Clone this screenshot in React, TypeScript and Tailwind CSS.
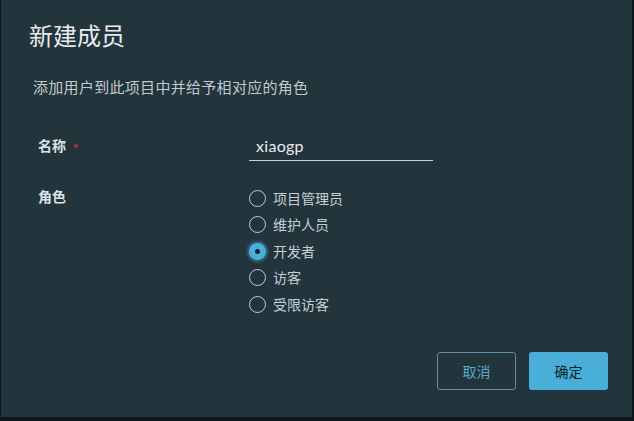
const roles = ["项目管理员", "维护人员", "开发者", "访客", "受限访客"];

function Radio({ checked }: { checked: boolean }) {
  if (checked) {
    return (
      <span className="flex h-[17px] w-[17px] items-center justify-center rounded-full bg-[#49afd9] shadow-[0_0_3px_2px_rgba(73,175,217,0.45)]">
        <span className="h-[5px] w-[5px] rounded-full bg-[#13242b]" />
      </span>
    );
  }
  return <span className="h-[17px] w-[17px] rounded-full border border-[#c6ced2]" />;
}

export default function App() {
  return (
    <div
      className="h-[421px] w-[634px] bg-[#0c171c]"
      style={{ fontFamily: '"Lato", "Noto Sans CJK SC", sans-serif' }}
    >
      <div className="ml-[1px] flex h-[417px] w-[631px] flex-col bg-[#22343c]">
        <div className="pl-[28px] pt-[20px] text-[24px] leading-8 text-[#e9ecef]">新建成员</div>
        <div className="mt-[25px] pl-[32px] text-[15px] tracking-[0.3px] leading-5 text-[#c1c9cd]">
          添加用户到此项目中并给予相对应的角色
        </div>

        <div className="mt-[39px] flex items-start">
          <div className="flex w-[248px] items-center pl-[37px] text-[14px] font-semibold leading-5 text-[#dbe1e4]">
            名称
            <span className="ml-[8px] h-[4px] w-[4px] rounded-full bg-[#a8323a]" />
          </div>
          <div className="w-[184px] border-b border-[#c5cfd5] pb-[4px] pl-[7px] text-[16px] tracking-[0.3px] leading-5 text-[#e9ecef]">
            xiaogp
          </div>
        </div>

        <div className="mt-[26px] flex items-start">
          <div className="w-[248px] pl-[37px] text-[14px] font-semibold leading-5 text-[#dbe1e4]">角色</div>
          <div className="-mt-[2px] flex flex-col">
            {roles.map((r, i) => (
              <div key={r} className="flex h-[26.5px] items-center gap-[7px] text-[14px] text-[#c6ced2]">
                <Radio checked={i === 2} />
                <span>{r}</span>
              </div>
            ))}
          </div>
        </div>

        <div className="mt-auto mb-[27px] flex justify-end gap-[13px] pr-[24px]">
          <button className="h-[38px] w-[79px] rounded-[3px] border border-[#5e8fa3] text-[14px] text-[#5aa9c9]">
            取消
          </button>
          <button className="h-[38px] w-[79px] rounded-[3px] bg-[#49afd9] text-[14px] text-[#0f1f26]">
            确定
          </button>
        </div>
      </div>
    </div>
  );
}
